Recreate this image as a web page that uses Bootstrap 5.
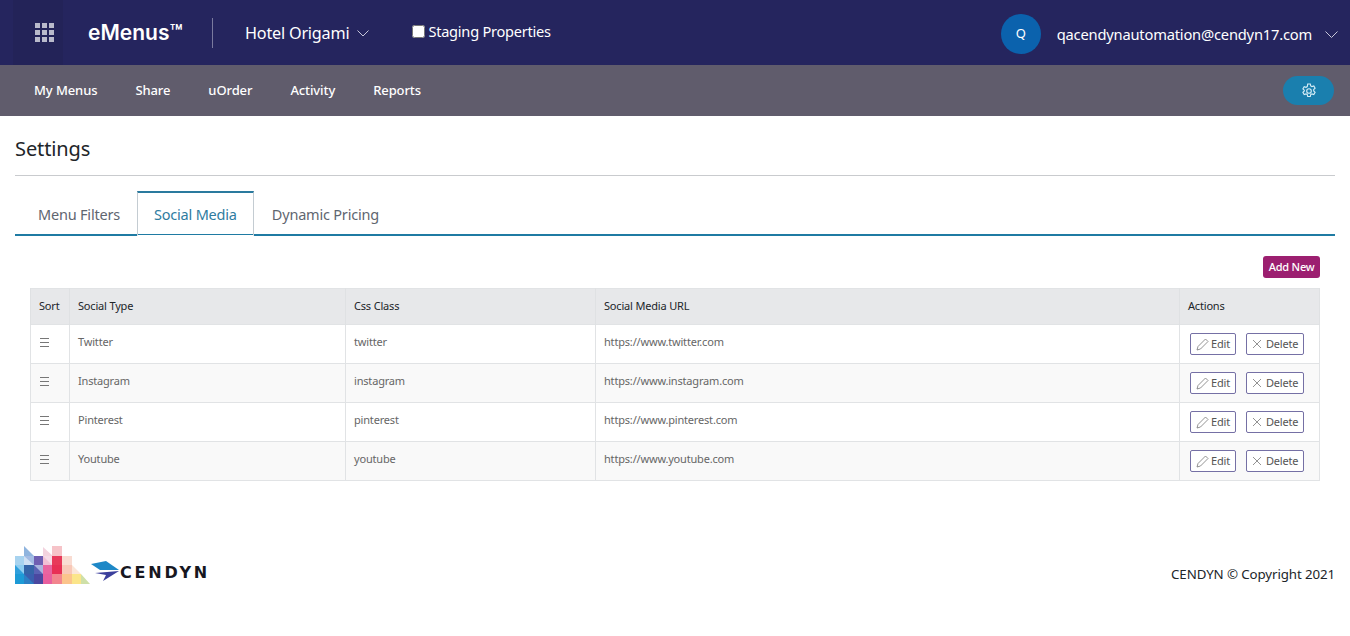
<!DOCTYPE html>
<html lang="en">
<head>
    <meta charset="UTF-8">
    <meta name="viewport" content="width=device-width, initial-scale=1.0">
    <title>Settings</title>
    <link href="https://cdn.jsdelivr.net/npm/bootstrap@5.3.0/dist/css/bootstrap.min.css" rel="stylesheet">
    <style>
        body {
            font-family: "Noto Sans", "Open Sans", sans-serif;
            color: #212529;
            background: #fff;
        }
        .top-bar {
            height: 65px;
            padding-left: 13px;
            background: #25255e;
            color: #fff;
        }
        .apps-box {
            width: 50px;
            height: 65px;
            padding-left: 22px;
            background: #232358;
        }
        .brand-name {
            width: 149px;
            padding-left: 25px;
            font-family: Inter, "Liberation Sans", sans-serif;
            font-size: 21px;
            font-weight: 600;
            white-space: nowrap;
        }
        .brand-rule {
            width: 1px;
            height: 30px;
            background: #7a7a9e;
        }
        .hotel-name {
            margin-left: 32px;
            padding-top: 2px;
            font-size: 16.2px;
            letter-spacing: -.2px;
        }
        .staging-check {
            margin-left: 43px;
            margin-top: -2px;
            font-size: 14.6px;
            letter-spacing: -.25px;
        }
        .staging-check input {
            width: 13px;
            height: 13px;
            margin: 0 3px 0 0;
        }
        .user-box {
            padding: 3px 12px 0 0;
        }
        .user-dot {
            width: 40px;
            height: 40px;
            background: #0b62ad;
            font-size: 13px;
        }
        .user-mail {
            margin: 0 13px 0 16px;
            font-size: 14.7px;
            letter-spacing: -.2px;
        }
        .sub-bar {
            height: 51px;
            padding: 0 16px 0 34px;
            background: #605c6c;
        }
        .sub-bar a {
            margin-right: 38px;
            padding-top: 1px;
            color: #fff;
            font-size: 13px;
            font-weight: 500;
            letter-spacing: -.1px;
            text-decoration: none;
        }
        .gear-btn {
            width: 51px;
            height: 29px;
            border-radius: 15px;
            background: #1a7fae;
        }
        .page-body { padding: 0 15px; }
        .page-title {
            height: 60px;
            margin: 0;
            padding-top: 21px;
            border-bottom: 1px solid #c9cbce;
            font-size: 20px;
            font-weight: 400;
            letter-spacing: -.1px;
        }
        .tab-row {
            height: 45px;
            margin-top: 15px;
            border-bottom: 2px solid #1f7ba3;
        }
        .tab-row .nav-link {
            height: 45px;
            margin-bottom: -2px;
            padding: 0 16px;
            border: 1px solid transparent;
            border-radius: 0;
            color: #5f6670;
            font-size: 14.5px;
            letter-spacing: -.2px;
            line-height: 45px;
        }
        .tab-row .nav-link.active {
            border-color: #2a7a9e #c4ccd2 #fff;
            border-top-width: 2px;
            color: #2f7c9f;
            line-height: 43px;
        }
        .add-row {
            padding: 20px 15px 10px;
        }
        .add-btn {
            height: 22px;
            padding: 0 5.5px;
            border: 0;
            border-radius: 3px;
            background: #9c1f70;
            color: #fff;
            font-size: 11px;
            font-weight: 500;
            letter-spacing: -.2px;
            line-height: 22px;
        }
        .table-wrap { padding: 0 15px; }
        .social-table {
            table-layout: fixed;
            width: 1289px;
            margin: 0;
            border-color: #e1e3e5;
            font-size: 11px;
            letter-spacing: -.18px;
        }
        .social-table th {
            height: 36px;
            padding: 0 8px;
            border-color: #dfe1e3;
            background: #e7e8ea;
            color: #212529;
            font-weight: 400;
            vertical-align: middle;
        }
        .social-table td {
            height: 39px;
            padding: 9px 8px 0;
            color: #666;
            vertical-align: top;
        }
        .social-table tbody tr:nth-child(even) td { background: #f9f9f9; }
        .sort-bars {
            display: block;
            margin: 0 0 0 1px;
            padding-top: 4px;
            height: 13px;
        }
        .row-actions {
            gap: 10px;
            margin: -1px 0 0 2px;
        }
        .row-btn {
            display: inline-flex;
            align-items: center;
            height: 22px;
            padding: 0 5px;
            border: 1px solid #7570a5;
            border-radius: 2px;
            background: #fff;
            color: #555;
        }
        .row-btn .pencil-icon { margin-right: 2px; }
        .row-btn .cross-icon { margin-right: 4px; }
        .page-foot {
            height: 38px;
            margin-top: 65px;
        }
        .copy-text {
            margin-top: 19px;
            font-size: 13.3px;
            letter-spacing: -.1px;
        }
        .logo-word {
            margin-top: 15px;
            margin-left: 1px;
            font-family: "DejaVu Sans", sans-serif;
            font-size: 16px;
            font-weight: 700;
            letter-spacing: 2.8px;
            color: #17171f;
        }
    </style>
</head>
<body>
    <!-- Top bar -->
    <div class="top-bar d-flex align-items-center">
        <div class="apps-box d-flex align-items-center">
            <svg width="19" height="19" viewBox="0 0 19 19" fill="#b9bacb">
                <rect x="0" y="0" width="5" height="5"/><rect x="7" y="0" width="5" height="5"/><rect x="14" y="0" width="5" height="5"/>
                <rect x="0" y="7" width="5" height="5"/><rect x="7" y="7" width="5" height="5"/><rect x="14" y="7" width="5" height="5"/>
                <rect x="0" y="14" width="5" height="5"/><rect x="7" y="14" width="5" height="5"/><rect x="14" y="14" width="5" height="5"/>
            </svg>
        </div>
        <div class="brand-name">eMenus™</div>
        <div class="brand-rule"></div>
        <div class="hotel-name d-flex align-items-center gap-2">Hotel Origami
            <svg width="12" height="7" viewBox="0 0 12 7" fill="none" stroke="#c8c8da"><path d="M.5.5 6 6l5.5-5.5"/></svg>
        </div>
        <label class="staging-check d-flex align-items-center">
            <input type="checkbox">Staging Properties
        </label>
        <div class="user-box ms-auto d-flex align-items-center">
            <div class="user-dot rounded-circle d-flex align-items-center justify-content-center">Q</div>
            <div class="user-mail">qacendynautomation@cendyn17.com</div>
            <svg width="13" height="7" viewBox="0 0 13 7" fill="none" stroke="#c8c8da"><path d="M.5.5l6 6 6-6"/></svg>
        </div>
    </div>

    <!-- Sub nav -->
    <div class="sub-bar d-flex align-items-center">
        <a href="#">My Menus</a>
        <a href="#">Share</a>
        <a href="#">uOrder</a>
        <a href="#">Activity</a>
        <a href="#">Reports</a>
        <div class="gear-btn ms-auto d-flex align-items-center justify-content-center">
            <svg width="16" height="16" viewBox="0 0 16 16" fill="none" stroke="#d8eef7" stroke-width="1.1">
                <circle cx="8" cy="8" r="2.3"/>
                <path d="M6.7 1h2.6l.4 1.9 1.3.7 1.8-.6 1.3 2.2-1.4 1.3v1.5l1.4 1.3-1.3 2.2-1.8-.6-1.3.7-.4 1.9H6.7l-.4-1.9-1.3-.7-1.8.6-1.3-2.2 1.4-1.3V7.2L1.9 5.9l1.3-2.2 1.8.6 1.3-.7z"/>
            </svg>
        </div>
    </div>

    <div class="page-body">
        <h1 class="page-title">Settings</h1>

        <ul class="nav tab-row">
            <li class="nav-item"><a class="nav-link" href="#" style="padding-left:22px">Menu Filters</a></li>
            <li class="nav-item"><a class="nav-link active" href="#">Social Media</a></li>
            <li class="nav-item"><a class="nav-link" href="#" style="padding-left:17px">Dynamic Pricing</a></li>
        </ul>

        <div class="add-row d-flex justify-content-end">
            <button class="add-btn" type="button">Add New</button>
        </div>

        <div class="table-wrap">
            <table class="table table-bordered social-table">
                <colgroup>
                    <col style="width:39px"><col style="width:276px"><col style="width:250px"><col style="width:584px"><col style="width:140px">
                </colgroup>
                <thead>
                    <tr><th>Sort</th><th>Social Type</th><th>Css Class</th><th>Social Media URL</th><th>Actions</th></tr>
                </thead>
                <tbody id="social-rows"></tbody>
            </table>
        </div>

        <div class="page-foot d-flex justify-content-between">
            <div class="d-flex align-items-center">
                <svg width="75" height="38" viewBox="0 0 75 38">
                    <polygon points="9,0 9,10 19,10" fill="#8fb4de"/>
                    <polygon points="28,1 28,10 38,10" fill="#f3d3de"/>
                    <rect x="37" y="0" width="10" height="10" fill="#f6c3c8"/>
                    <rect x="0" y="10" width="9" height="9" fill="#a8d3ef"/>
                    <rect x="9" y="10" width="10" height="9" fill="#cfe0f3"/>
                    <polygon points="9,10 19,10 19,19" fill="#a3bce4"/>
                    <rect x="19" y="10" width="9" height="9" fill="#6f5fb2"/>
                    <rect x="28" y="10" width="9" height="9" fill="#f1bfd4"/>
                    <polygon points="28,10 37,10 37,19" fill="#f6dbe6"/>
                    <rect x="37" y="10" width="10" height="9" fill="#e8395a"/>
                    <rect x="47" y="10" width="10" height="9" fill="#f9dcd2"/>
                    <rect x="0" y="19" width="9" height="9" fill="#2f9fdc"/>
                    <polygon points="0,19 9,19 9,28" fill="#8ecdf0"/>
                    <rect x="9" y="19" width="10" height="9" fill="#3565a8"/>
                    <rect x="19" y="19" width="9" height="9" fill="#a9b4de"/>
                    <polygon points="19,28 28,28 19,19" fill="#5a62b4"/>
                    <rect x="28" y="19" width="9" height="9" fill="#e864a0"/>
                    <rect x="37" y="19" width="10" height="9" fill="#e82f55"/>
                    <rect x="47" y="19" width="10" height="9" fill="#f8c8b8"/>
                    <polygon points="57,19 57,28 66,28" fill="#fbe6d8"/>
                    <rect x="0" y="28" width="9" height="10" fill="#1d9ad6"/>
                    <rect x="9" y="28" width="10" height="10" fill="#2d7fc4"/>
                    <polygon points="9,28 19,28 19,38" fill="#3a5fae"/>
                    <rect x="19" y="28" width="9" height="10" fill="#4a48a0"/>
                    <rect x="28" y="28" width="9" height="10" fill="#e85f9e"/>
                    <rect x="37" y="28" width="10" height="10" fill="#f2858e"/>
                    <rect x="47" y="28" width="10" height="10" fill="#fbc48c"/>
                    <rect x="57" y="28" width="9" height="10" fill="#fbe58a"/>
                    <polygon points="66,28 66,38 75,38" fill="#cfe0a8"/>
                </svg>
                <svg width="28" height="20" viewBox="0 0 28 20" style="margin-top:12px;margin-left:1px">
                    <polygon points="0,3 15,0 28,9 9,9" fill="#1e88c7"/>
                    <polygon points="4,12 28,10 12,20 15,14" fill="#3c3f9c"/>
                </svg>
                <span class="logo-word">CENDYN</span>
            </div>
            <div class="copy-text">CENDYN © Copyright 2021</div>
        </div>
    </div>

    <script>
        const socialRows = [
            ['Twitter', 'twitter', 'https://www.twitter.com'],
            ['Instagram', 'instagram', 'https://www.instagram.com'],
            ['Pinterest', 'pinterest', 'https://www.pinterest.com'],
            ['Youtube', 'youtube', 'https://www.youtube.com']
        ];
        const pencil = '<svg class="pencil-icon" width="13" height="13" viewBox="0 0 13 13" fill="none" stroke="#777" stroke-width=".8"><path d="M1 12l1-3.5L9.5 1 12 3.5 4.5 11z"/></svg>';
        const cross = '<svg class="cross-icon" width="10" height="10" viewBox="0 0 10 10" fill="none" stroke="#777" stroke-width=".8"><path d="M1 1l8 8M9 1L1 9"/></svg>';
        const bars = '<svg class="sort-bars" width="9" height="13" viewBox="0 0 9 9" stroke="#777"><path d="M0 .5h9M0 4.5h9M0 8.5h9"/></svg>';

        document.getElementById('social-rows').innerHTML = socialRows.map(r => `
            <tr>
                <td>${bars}</td>
                <td>${r[0]}</td>
                <td>${r[1]}</td>
                <td>${r[2]}</td>
                <td class="text-nowrap">
                    <div class="row-actions d-flex">
                        <span class="row-btn">${pencil}Edit</span><span class="row-btn">${cross}Delete</span>
                    </div>
                </td>
            </tr>`).join('');
    </script>
    <script src="https://cdn.jsdelivr.net/npm/bootstrap@5.3.0/dist/js/bootstrap.bundle.min.js"></script>
</body>
</html>
